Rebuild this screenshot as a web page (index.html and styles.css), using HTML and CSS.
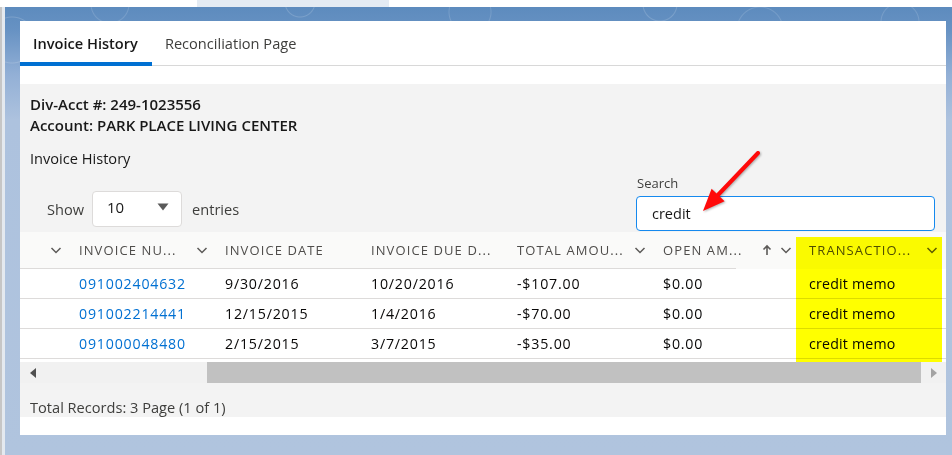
FILE: index.html
```html
<!DOCTYPE html>
<html lang="en">
<head>
<meta charset="utf-8">
<title>Invoice History</title>
<link rel="stylesheet" href="styles.css">
</head>
<body>
<div class="topbar"><div class="topbox"></div></div>
<main class="stage">
  <section class="card">
    <nav class="tabs">
      <a class="tab active">Invoice History</a>
      <a class="tab">Reconciliation Page</a>
    </nav>
    <div class="gap"></div>
    <div class="panel">
      <div class="info">
        <div>Div-Acct #: 249-1023556</div>
        <div>Account: PARK PLACE LIVING CENTER</div>
      </div>
      <div class="section-title">Invoice History</div>
      <div class="controls">
        <div class="length">
          <span>Show</span>
          <div class="select"><span>10</span><svg class="tri" width="12" height="8" viewBox="0 0 12 8"><path d="M0.5 0.5 H11.5 L6 7.5 Z" fill="#5a5a5a"/></svg></div>
          <span>entries</span>
        </div>
        <div class="search">
          <label>Search</label>
          <div class="input">credit</div>
        </div>
      </div>
      <div class="grid">
        <div class="row head">
          <div class="cell c0"><svg class="ico" width="12" height="12" viewBox="0 0 12 12"><path d="M1.5 4 L6 8.5 L10.5 4" fill="none" stroke="#5c5a58" stroke-width="1.5"/></svg></div>
          <div class="cell"><span class="lbl">Invoice Nu...</span><svg class="ico" width="12" height="12" viewBox="0 0 12 12"><path d="M1.5 4 L6 8.5 L10.5 4" fill="none" stroke="#5c5a58" stroke-width="1.5"/></svg></div>
          <div class="cell"><span class="lbl">Invoice Date</span></div>
          <div class="cell"><span class="lbl">Invoice Due D...</span></div>
          <div class="cell"><span class="lbl">Total Amou...</span><svg class="ico" width="12" height="12" viewBox="0 0 12 12"><path d="M1.5 4 L6 8.5 L10.5 4" fill="none" stroke="#5c5a58" stroke-width="1.5"/></svg></div>
          <div class="cell"><span class="lbl">Open Am...</span><span class="icons"><svg class="ico" width="12" height="12" viewBox="0 0 12 12"><path d="M6 11 V2 M2.5 5.5 L6 2 L9.5 5.5" fill="none" stroke="#5c5a58" stroke-width="1.6"/></svg><svg class="ico" width="12" height="12" viewBox="0 0 12 12"><path d="M1.5 4 L6 8.5 L10.5 4" fill="none" stroke="#5c5a58" stroke-width="1.5"/></svg></span></div>
          <div class="cell"><span class="lbl">Transactio...</span><svg class="ico" width="12" height="12" viewBox="0 0 12 12"><path d="M1.5 4 L6 8.5 L10.5 4" fill="none" stroke="#5c5a58" stroke-width="1.5"/></svg></div>
        </div>
        <div class="row">
          <div class="cell c0"></div>
          <div class="cell"><a class="link">091002404632</a></div>
          <div class="cell">9/30/2016</div>
          <div class="cell">10/20/2016</div>
          <div class="cell">-$107.00</div>
          <div class="cell">$0.00</div>
          <div class="cell txt">credit memo</div>
        </div>
        <div class="row">
          <div class="cell c0"></div>
          <div class="cell"><a class="link">091002214441</a></div>
          <div class="cell">12/15/2015</div>
          <div class="cell">1/4/2016</div>
          <div class="cell">-$70.00</div>
          <div class="cell">$0.00</div>
          <div class="cell txt">credit memo</div>
        </div>
        <div class="row">
          <div class="cell c0"></div>
          <div class="cell"><a class="link">091000048480</a></div>
          <div class="cell">2/15/2015</div>
          <div class="cell">3/7/2015</div>
          <div class="cell">-$35.00</div>
          <div class="cell">$0.00</div>
          <div class="cell txt">credit memo</div>
        </div>
      </div>
      <div class="hscroll">
        <div class="sbtn"><svg width="6" height="10" viewBox="0 0 6 10"><path d="M6 0 V10 L0 5 Z" fill="#505050"/></svg></div>
        <div class="track"><div class="thumb"></div></div>
        <div class="sbtn"><svg width="6" height="10" viewBox="0 0 6 10"><path d="M0 0 V10 L6 5 Z" fill="#a3a3a3"/></svg></div>
      </div>
      <div class="footer">Total Records: 3 Page (1 of 1)</div>
    </div>
  </section>
</main>
<div class="highlight"></div>
<svg class="arrow" width="70" height="75" viewBox="0 0 70 75">
  <line x1="63" y1="8" x2="22" y2="51" stroke="#ff0a0a" stroke-width="4" stroke-linecap="round"/>
  <polygon points="8,66 16.6,43.8 29.6,56.2" fill="#ff0a0a"/>
</svg>
</body>
</html>
```
FILE: styles.css
```css
* { box-sizing: border-box; }
html, body { margin: 0; padding: 0; }
body {
  width: 952px;
  height: 455px;
  overflow: hidden;
  position: relative;
  font-family: "Open Sans", "Noto Sans", sans-serif;
  color: #080707;
  background:
    linear-gradient(to right, #c6c6c6 0 2px, #e4e9ef 2px 5px, transparent 5px),
    radial-gradient(circle at 12px 40px, transparent 22px, rgba(255,255,255,0.16) 23px, transparent 24px),
    radial-gradient(circle at 110px 4px, transparent 18px, rgba(255,255,255,0.14) 19px, transparent 20px),
    radial-gradient(circle at 300px 2px, transparent 14px, rgba(255,255,255,0.16) 15px, transparent 16px),
    radial-gradient(circle at 470px 12px, transparent 20px, rgba(255,255,255,0.14) 21px, transparent 22px),
    radial-gradient(circle at 660px 4px, transparent 16px, rgba(255,255,255,0.16) 17px, transparent 18px),
    radial-gradient(circle at 760px 30px, transparent 22px, rgba(255,255,255,0.14) 23px, transparent 24px),
    radial-gradient(circle at 900px 22px, transparent 18px, rgba(255,255,255,0.14) 19px, transparent 20px),
    linear-gradient(#5a89bc 0px, #6792c3 30px, #93b0d6 75px, #adc2de 120px, #b0c4de 455px);
}
.topbar {
  height: 7px;
  background: #fff;
  display: flex;
}
.topbox {
  margin-left: 197px;
  width: 192px;
  background: #e4ebf3;
}
.stage {
  padding: 14px 6px 0 20px;
}
.card {
  background: #fff;
  height: 414px;
  display: flex;
  flex-direction: column;
}
.tabs {
  display: flex;
  height: 45px;
  box-shadow: inset 0 -1px 0 #d8d8d8;
}
.tab {
  display: flex;
  align-items: center;
  padding: 0 14px 2px 13px;
  font-size: 14.6px;
  color: #3e3e3c;
}
.tab.active {
  font-weight: 600;
  color: #181818;
  box-shadow: inset 0 -4px 0 #0070d2;
}
.gap { height: 18px; }
.panel {
  background: #f3f3f3;
  height: 333px;
}
.info {
  padding: 10px 10px 0;
  font-size: 15px;
  line-height: 21px;
  font-weight: 600;
  color: #181818;
}
.section-title {
  margin-top: 12px;
  padding: 0 10px;
  font-size: 14.6px;
  line-height: 21px;
  font-weight: 500;
  color: #181818;
}
.controls {
  height: 63px;
  display: flex;
  justify-content: space-between;
  align-items: flex-end;
}
.length {
  display: flex;
  align-items: center;
  margin: 0 0 5px 27px;
  font-size: 14.6px;
  color: #3e3e3c;
}
.select {
  width: 90px;
  height: 36px;
  margin: 0 10px 0 8px;
  background: #fff;
  border: 1px solid #dddbda;
  border-radius: 4px;
  display: flex;
  align-items: center;
  justify-content: space-between;
  padding: 0 12px 0 14px;
  font-size: 15px;
  color: #181818;
}
.select span { position: relative; top: -2px; }
.tri { position: relative; top: -2px; }
.search {
  display: flex;
  flex-direction: column;
  margin: 0 11px 1px 0;
  width: 299px;
}
.search label {
  font-size: 13px;
  line-height: 18px;
  color: #3e3e3c;
  padding-left: 1px;
  margin-bottom: 4px;
}
.input {
  height: 35px;
  background: #fff;
  border: 1px solid #1589ee;
  border-radius: 4px;
  padding: 0 15px;
  display: flex;
  align-items: center;
  font-size: 14.5px;
  color: #181818;
}
.grid {
  overflow: hidden;
  background: #fff;
  padding-bottom: 3px;
}
.row {
  display: grid;
  grid-template-columns: 51px repeat(6, 146px);
  height: 30px;
  border-bottom: 1px solid #dddbda;
  font-size: 14.2px;
  letter-spacing: 0.8px;
}
.row.head {
  height: 37px;
  border-bottom: 0;
  background: linear-gradient(#dddbda, #dddbda) no-repeat left bottom / 716px 1px, #fafaf9;
}
.cell {
  display: flex;
  align-items: center;
  padding: 0 9px 1px 8px;
  white-space: nowrap;
  overflow: hidden;
}
.cell.txt { letter-spacing: 0.2px; }
.head .cell {
  justify-content: space-between;
  padding-bottom: 1px;
}
.head .c0 { justify-content: flex-end; }
.lbl {
  text-transform: uppercase;
  font-size: 13px;
  letter-spacing: 1.1px;
  color: #4f4d4b;
}
.icons { display: flex; gap: 7px; }
.ico { display: block; flex: none; }
.link { color: #0070d2; }
.hscroll {
  height: 21px;
  display: flex;
  background: #f1f1f1;
}
.sbtn {
  width: 25px;
  display: flex;
  align-items: center;
  justify-content: center;
}
.track {
  flex: 1;
  padding-left: 162px;
  display: flex;
}
.thumb {
  flex: 1;
  background: #c1c1c1;
}
.footer {
  padding: 14px 10px 0;
  font-size: 14.6px;
  line-height: 20px;
  color: #3e3e3c;
}
.highlight {
  position: absolute;
  left: 796px;
  top: 237px;
  width: 146px;
  height: 125px;
  background: #ffff00;
  mix-blend-mode: multiply;
}
.arrow {
  position: absolute;
  left: 695px;
  top: 145px;
  filter: drop-shadow(1px 1px 1px rgba(0,0,0,0.3));
}
```
